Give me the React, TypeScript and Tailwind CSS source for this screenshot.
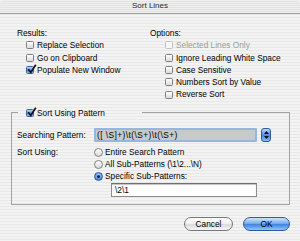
import React from "react"

// Aqua pinstripe used for the window and the title bar
const stripes =
  "bg-[repeating-linear-gradient(180deg,#f3f3f3_0px,#f3f3f3_2px,#e8e8e8_2px,#e8e8e8_3px)]"

function Box({ checked, disabled }: { checked?: boolean; disabled?: boolean }) {
  const look = checked
    ? "border-[#3a66a3] bg-[linear-gradient(180deg,#b9d6f6,#4f8fe0_55%,#7fb2ee)]"
    : disabled
    ? "border-[#c2c2c2] bg-[#f7f7f7]"
    : "border-[#7f7f7f] bg-[linear-gradient(180deg,#ffffff,#dadada)]"
  return (
    <span className={`relative inline-block w-[8px] h-[8px] shrink-0 rounded-[1.5px] border ${look}`}>
      {checked && (
        <svg className="absolute -top-[3px] left-[0px] w-[10px] h-[10px]" viewBox="0 0 10 10">
          <path d="M1.2 5.2 L3.8 8.4 L8.8 0.8" fill="none" stroke="#111" strokeWidth="1.7" />
        </svg>
      )}
    </span>
  )
}

function Check({ label, checked, disabled }: { label: string; checked?: boolean; disabled?: boolean }) {
  return (
    <div className={`flex items-center h-[12.3px] gap-[3px] ${disabled ? "text-[#9c9c9c]" : ""}`}>
      <Box checked={checked} disabled={disabled} />
      <span>{label}</span>
    </div>
  )
}

function Radio({ label, on }: { label: string; on?: boolean }) {
  const look = on
    ? "border-[#2e5d9c] bg-[radial-gradient(circle_at_50%_35%,#c3dcf7,#4586dc_70%)]"
    : "border-[#7f7f7f] bg-[linear-gradient(180deg,#ffffff,#d8d8d8)]"
  return (
    <div className="flex items-center h-[12px] gap-[2px]">
      <span className={`flex items-center justify-center w-[9px] h-[9px] shrink-0 rounded-full border ${look}`}>
        {on && <span className="w-[3px] h-[3px] rounded-full bg-[#0f1f3d]" />}
      </span>
      <span>{label}</span>
    </div>
  )
}

export default function App() {
  return (
    <div
      className={`w-[300px] h-[241px] overflow-hidden ${stripes} text-[8.3px] leading-[12.3px] text-black font-['Liberation_Sans',Arial,sans-serif]`}
    >
      {/* Title bar */}
      <div className="h-[14px] rounded-t-[4px] border-b border-[#9e9e9e] bg-[repeating-linear-gradient(180deg,#f0f0f0_0px,#f0f0f0_1px,#e2e2e2_1px,#e2e2e2_2px)] flex items-center justify-center text-[8px] text-[#2a2a2a]">
        Sort Lines
      </div>

      {/* Results / Options */}
      <div className="flex pt-[13px]">
        <div className="w-[150px] pl-[17px]">
          <div className="h-[12.3px]">Results:</div>
          <div className="pl-[9px]">
            <Check label="Replace Selection" />
            <Check label="Go on Clipboard" />
            <Check label="Populate New Window" checked />
          </div>
        </div>
        <div>
          <div className="h-[12.3px]">Options:</div>
          <div className="pl-[15px]">
            <Check label="Selected Lines Only" disabled />
            <Check label="Ignore Leading White Space" />
            <Check label="Case Sensitive" />
            <Check label="Numbers Sort by Value" />
            <Check label="Reverse Sort" />
          </div>
        </div>
      </div>

      {/* Sort Using Pattern group */}
      <fieldset className="mt-[6px] ml-[11px] mr-[10px] border border-[#a2a2a2] pb-[7px]">
        <legend className="ml-[6px] w-[124px] pl-[8px] flex items-center gap-[3px] h-[12.3px]">
          <Box checked />
          <span>Sort Using Pattern</span>
        </legend>

        <div className="pt-[9px] flex items-center h-[23px] box-border">
          <div className="w-[82px] pl-[5px]">Searching Pattern:</div>
          <div className="w-[163px] h-[14px] rounded-[1px] border-2 border-[#93b6e2] bg-[#c9c9c9] flex items-center px-[1px] tracking-[0.45px] whitespace-nowrap overflow-hidden">
            {"([ \\S]+)\\t(\\S+)\\t(\\S+)"}
          </div>
          <div className="ml-[4px] w-[10px] h-[14px] rounded-[3px] border border-[#2d5a9b] bg-[linear-gradient(180deg,#b7d5f7,#4a8ae0_55%,#86baf2)] flex flex-col items-center justify-center gap-[2px]">
            <svg width="5" height="3" viewBox="0 0 5 3">
              <path d="M0 3 L2.5 0 L5 3 Z" fill="#111" />
            </svg>
            <svg width="5" height="3" viewBox="0 0 5 3">
              <path d="M0 0 L2.5 3 L5 0 Z" fill="#111" />
            </svg>
          </div>
        </div>

        <div className="mt-[4px] flex">
          <div className="w-[82px] pl-[5px] h-[12px] flex items-center">Sort Using:</div>
          <div>
            <Radio label="Entire Search Pattern" />
            <Radio label="All Sub-Patterns (\1\2...\N)" />
            <Radio label="Specific Sub-Patterns:" on />
            <div className="mt-[1px] ml-[17px] w-[146px] h-[14px] border border-[#8c8c8c] border-t-[#6f6f6f] bg-white shadow-[inset_0_1px_1px_rgba(0,0,0,0.25)] flex items-center px-[3px]">
              {"\\2\\1"}
            </div>
          </div>
        </div>
      </fieldset>

      {/* Buttons */}
      <div className="mt-[12px] pr-[10px] flex justify-end gap-[10px]">
        <button className="w-[49px] h-[14px] rounded-full border border-[#777777] bg-[linear-gradient(180deg,#ffffff_0%,#f2f2f2_45%,#dadada_55%,#f7f7f7_100%)] flex items-center justify-center">
          Cancel
        </button>
        <button className="w-[47px] h-[14px] rounded-full border border-[#2c5a9e] bg-[linear-gradient(180deg,#cfe4fa_0%,#77afee_45%,#3f86e0_55%,#93c5f7_100%)] flex items-center justify-center">
          OK
        </button>
      </div>
    </div>
  )
}
